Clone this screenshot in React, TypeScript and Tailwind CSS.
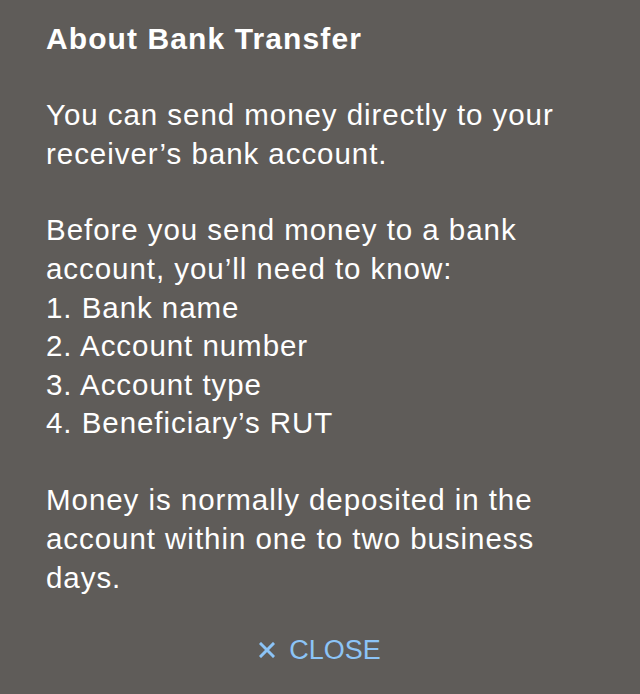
export default function App() {
  return (
    <div className="w-[640px] h-[694px] bg-[#5f5c59] text-white font-['Liberation_Sans',Arial,sans-serif] pl-[46px] pr-[40px] pt-[20px] overflow-hidden">
      <h1 className="text-[30px] font-bold leading-[38.5px] tracking-[1.1px]">About Bank Transfer</h1>
      <div className="mt-[37.5px] text-[29.5px] leading-[38.6px] tracking-[0.95px] flex flex-col gap-[38.3px]">
        <p>You can send money directly to your receiver’s bank account.</p>
        <div>
          <p>Before you send money to a bank account, you’ll need to know:</p>
          <p>1. Bank name</p>
          <p>2. Account number</p>
          <p>3. Account type</p>
          <p>4. Beneficiary’s RUT</p>
        </div>
        <p>Money is normally deposited in the account within one to two business days.</p>
      </div>
      <div className="mt-[34px] flex justify-center pr-[6px]">
        <button className="flex items-center gap-[14px] text-[#8cc4f7] text-[27px] leading-[38.6px]">
          <svg width="16" height="16" viewBox="0 0 16 16" className="shrink-0">
            <path d="M2 2 L14 14 M14 2 L2 14" stroke="currentColor" strokeWidth="3" strokeLinecap="square" />
          </svg>
          <span>CLOSE</span>
        </button>
      </div>
    </div>
  );
}
